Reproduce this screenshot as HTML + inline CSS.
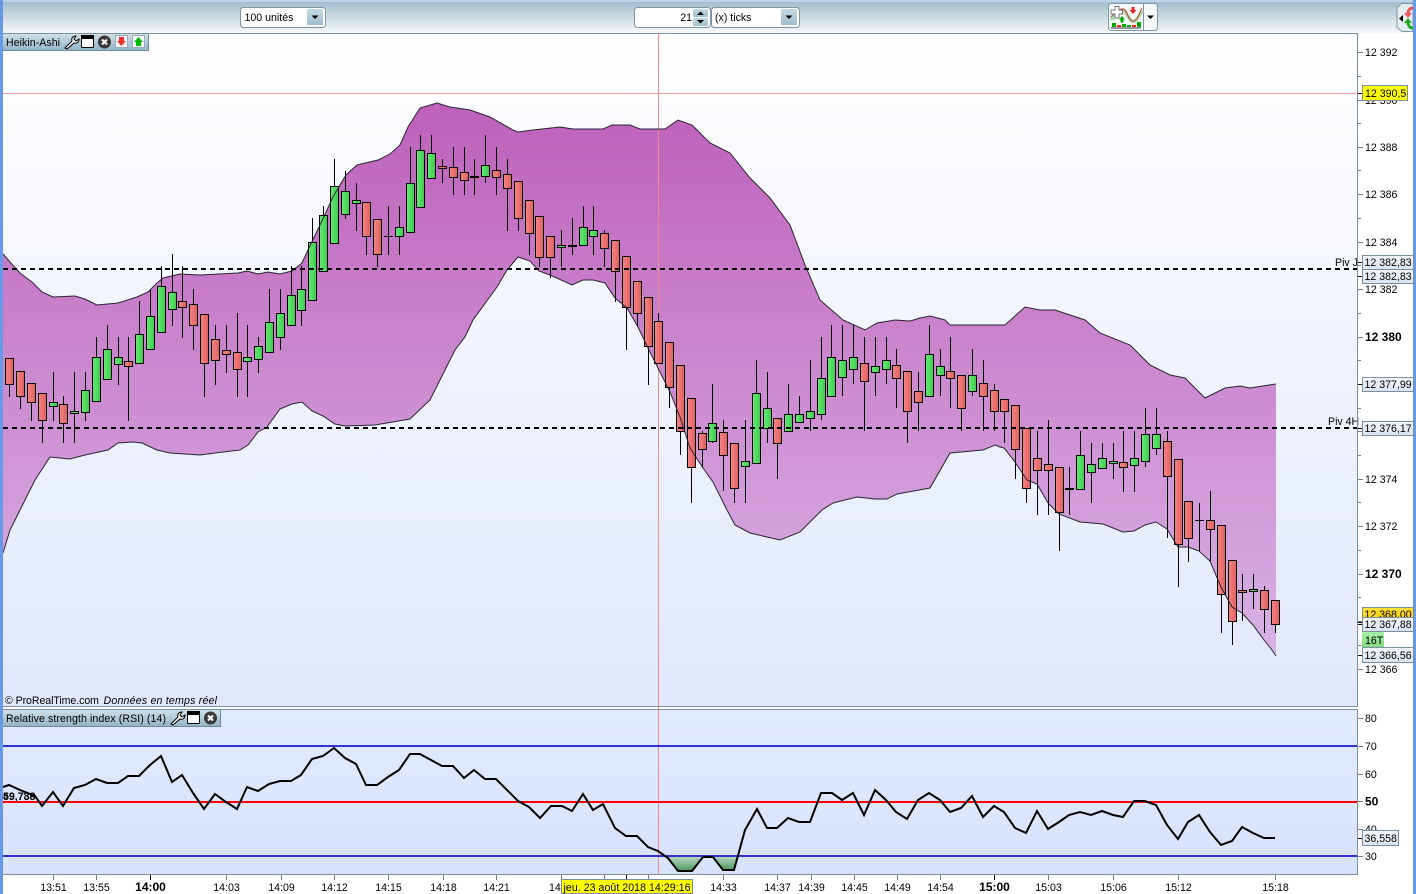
<!DOCTYPE html>
<html><head><meta charset="utf-8"><title>Heikin-Ashi</title>
<style>
html,body{margin:0;padding:0;background:#fff;width:1416px;height:894px;overflow:hidden}
svg{display:block}
text{font-family:"Liberation Sans",Arial,sans-serif;font-size:10.6px;fill:#000}
.b{font-weight:bold;font-size:12px}
.m{text-anchor:middle}
.r{fill:url(#gr);stroke:#000}
.g{fill:url(#gg);stroke:#000}
</style></head><body>
<svg width="1416" height="894" viewBox="0 0 1416 894" xmlns="http://www.w3.org/2000/svg">
<defs>
<linearGradient id="tb" x1="0" y1="0" x2="0" y2="1"><stop offset="0" stop-color="#9db9c8"/><stop offset="1" stop-color="#f6f9fb"/></linearGradient>
<linearGradient id="pn" x1="0" y1="0" x2="0" y2="1"><stop offset="0" stop-color="#ffffff"/><stop offset="1" stop-color="#e1e8fc"/></linearGradient>
<linearGradient id="rs" x1="0" y1="0" x2="0" y2="1"><stop offset="0" stop-color="#e1eaff"/><stop offset="1" stop-color="#d8e3fb"/></linearGradient>
<linearGradient id="bd" gradientUnits="userSpaceOnUse" x1="0" y1="100" x2="0" y2="656"><stop offset="0" stop-color="#bd60bb"/><stop offset="0.5" stop-color="#cc8acf"/><stop offset="1" stop-color="#d8b2e5"/></linearGradient>
<linearGradient id="gr" x1="0" y1="0" x2="1" y2="0"><stop offset="0" stop-color="#f58484"/><stop offset="1" stop-color="#e06060"/></linearGradient>
<linearGradient id="gg" x1="0" y1="0" x2="1" y2="0"><stop offset="0" stop-color="#66ea76"/><stop offset="1" stop-color="#3ecb4e"/></linearGradient>
<linearGradient id="lg" x1="0" y1="0" x2="0" y2="1"><stop offset="0" stop-color="#cfe0e8"/><stop offset="1" stop-color="#93b4c6"/></linearGradient>
<linearGradient id="bt" x1="0" y1="0" x2="0" y2="1"><stop offset="0" stop-color="#c4d8e2"/><stop offset="1" stop-color="#9fbdce"/></linearGradient>
<linearGradient id="gf" x1="0" y1="0" x2="0" y2="1"><stop offset="0" stop-color="#bcd8c4"/><stop offset="1" stop-color="#4c9a5e"/></linearGradient>
<linearGradient id="lb" x1="0" y1="0" x2="0" y2="1"><stop offset="0" stop-color="#f4f7fb"/><stop offset="1" stop-color="#d8e4f2"/></linearGradient>
<linearGradient id="gd" x1="0" y1="0" x2="0" y2="1"><stop offset="0" stop-color="#ffe23a"/><stop offset="1" stop-color="#ffc800"/></linearGradient>
<linearGradient id="tg" x1="0" y1="0" x2="0" y2="1"><stop offset="0" stop-color="#a8f0a8"/><stop offset="1" stop-color="#86d886"/></linearGradient>
</defs>

<!-- toolbar -->
<rect x="0" y="0" width="1416" height="33" fill="url(#tb)"/>
<rect x="0" y="0" width="1416" height="2" fill="#bcd4e8"/>
<rect x="240.500" y="7.500" width="85" height="20" rx="3" fill="#fff" stroke="#7d95a5"/>
<text x="244.500" y="21">100 unités</text>
<rect x="307" y="9" width="16" height="16" rx="1" fill="url(#bt)"/>
<path d="M311.500 15.500h7l-3.500 3.500z" fill="#000"/>
<rect x="634.500" y="7.500" width="76" height="20" rx="3" fill="#fff" stroke="#7d95a5"/>
<text x="692" y="21" text-anchor="end">21</text>
<rect x="693" y="9" width="15" height="8" rx="1" fill="url(#bt)"/>
<rect x="693" y="18" width="15" height="8" rx="1" fill="url(#bt)"/>
<path d="M697 15l3.500-3.500 3.500 3.500zM697 20h7l-3.500 3.500z" fill="#000"/>
<rect x="711.500" y="7.500" width="88" height="20" rx="3" fill="#fff" stroke="#7d95a5"/>
<text x="715" y="21">(x) ticks</text>
<rect x="781" y="9" width="16" height="16" rx="1" fill="url(#bt)"/>
<path d="M785.500 15.500h7l-3.500 3.500z" fill="#000"/>
<!-- indicator button -->
<rect x="1108.500" y="3.500" width="49" height="27" rx="3" fill="#f6f9fa" stroke="#8097a6"/>
<path d="M1143.500 4v26" stroke="#8097a6"/>
<path d="M1111 20c3-4 7-10 11-10s6 9 10 11 6-4 10-10" fill="none" stroke="#a9dca8" stroke-width="3.500"/>
<path d="M1111 17c4-5 8-8 12-8s5 11 9 12 7-5 10-13" fill="none" stroke="#c83838" stroke-width="1"/>
<rect x="1112" y="23" width="4" height="4" fill="#0a0"/><rect x="1117" y="25" width="4" height="2" fill="#e22"/><rect x="1122" y="24" width="4" height="3" fill="#0a0"/><rect x="1127" y="25" width="4" height="2" fill="#0a0"/><rect x="1132" y="25" width="4" height="2" fill="#e22"/><rect x="1137" y="22" width="4" height="5" fill="#0a0"/>
<path d="M1111 28h30" stroke="#335"/>
<path d="M1111 10h4v-3.500h4v3.500h3.500v4h-3.500v4h-4v-4h-4z" fill="#fff" stroke="#777"/>
<path d="M1119 19.500l3-3.500 3 3.500h-1.500v3h-3v-3z" fill="#0a0"/>
<path d="M1131.500 7h3v3h2l-3.500 4-3.500-4h2z" fill="#e22"/>
<path d="M1147 15.500h7l-3.500 3.500z" fill="#000"/>
<!-- right side icon -->
<path d="M1413 3.500h-11l-5 4v20l5 4h11z" fill="#e6edf2" stroke="#8097a6"/>
<path d="M1403 15v7l-4-3.500z" fill="#000"/>
<path d="M1413 8c-3 0-5 2-5 6" fill="none" stroke="#e55" stroke-width="3"/>
<path d="M1404 13h8l-4 5z" fill="#e55"/>
<path d="M1413 28c-3 0-5-2-5-6" fill="none" stroke="#2a2" stroke-width="3"/>
<path d="M1404 23h8l-4-5z" fill="#2a2"/>

<!-- panels -->
<rect x="3" y="34" width="1355" height="672" fill="url(#pn)"/>
<rect x="3" y="710" width="1355" height="164" fill="url(#rs)"/>

<!-- band -->
<polygon fill="url(#bd)" points="3,254 10,262 20,273 32,282 42,292 53,297 75,296 85,299 97,305 118,303 137,297 148,292 157,283 163,278 180,274 200,275 238,273 247,271 258,274 268,272 280,274 292,271 302,263 308,250 320,225 333,197 340,185 346,175 357,165 378,160 390,154 400,145 408,127 420,108 437,103 450,107 470,110 490,117 513,130 518,132 533,130 560,127 573,129 603,129 612,125 630,125 640,129 665,129 678,120 692,125 710,143 730,153 750,178 770,198 790,225 805,265 820,300 835,313 843,320 865,330 877,323 895,320 910,321 920,318 930,316 945,320 950,325 990,325 1005,325 1025,307 1040,310 1055,310 1085,320 1100,333 1130,345 1150,365 1170,375 1185,378 1205,398 1225,388 1240,386 1250,388 1276,384 1276,656 1272,650 1264,640 1253,625 1242,613 1232,607 1221,587 1210,561 1199,551 1188,547 1178,547 1167,529 1156,522 1145,525 1134,531 1123,532 1103,524 1080,522 1059,514 1048,503 1037,484 1027,480 1015,462 1004,448 1000,447 995,445 983,450 950,453 930,488 897,494 887,499 875,499 857,497 833,503 822,510 800,532 780,540 750,533 735,525 727,510 713,482 703,468 690,448 680,417 670,392 660,372 648,348 638,327 627,308 615,298 605,283 593,280 583,280 572,285 550,275 539,271 530,261 518,257 507,270 497,287 473,320 465,337 455,350 440,380 430,400 410,419 375,425 345,426 335,424 323,416 312,411 302,402 292,404 280,409 267,427 258,432 248,445 240,450 215,453 200,455 170,453 157,450 142,443 133,442 118,443 108,450 85,455 70,459 50,457 35,480 20,510 10,530 3,553"/>

<!-- crosshair -->
<path d="M658.500 34V874" stroke="#f08a8a"/>
<path d="M3 93.500H1358" stroke="#f2a0a0"/>

<!-- wicks -->
<path fill="none" stroke="#000" d="M9.500 358V397M20.500 371V409M31.500 383V421M42.500 393V443M53.500 372V421M63.500 396V443M74.500 372V443M85.500 372V421M96.500 337V401M107.500 325V379M118.500 337V385M128.500 337V421M139.500 301V363M150.500 290V349M161.500 266V332M172.500 254V326M182.500 266V338M193.500 289V350M204.500 314V397M215.500 325V385M226.500 325V373M237.500 313V397M247.500 325V397M258.500 337V373M269.500 289V352M280.500 289V350M291.500 266V325M301.500 266V326M312.500 218V300M323.500 206V271M334.500 159V243M345.500 171V219M356.500 183V231M366.500 202V255M377.500 219V267M388.500 206V255M399.500 206V255M410.500 147V232M420.500 135V207M431.500 135V178M442.500 159V183M453.500 147V195M464.500 147V195M474.500 159V195M485.500 135V183M496.500 147V195M507.500 159V231M518.500 181V231M529.500 200V255M539.500 216V267M550.500 236V278M561.500 230V267M572.500 218V255M583.500 206V245M593.500 206V255M604.500 230V267M615.500 240V302M626.500 256V350M637.500 281V327M648.500 297V385M658.500 313V363M669.500 342V408M680.500 365V455M691.500 398V503M702.500 431V468M712.500 384V443M723.500 420V491M734.500 443V503M745.500 420V503M756.500 360V463M767.500 372V443M777.500 418V479M788.500 384V431M799.500 396V422M810.500 360V431M821.500 337V420M831.500 325V396M842.500 325V396M853.500 325V384M864.500 337V431M875.500 337V396M886.500 337V384M896.500 349V408M907.500 371V443M918.500 372V431M929.500 325V396M940.500 349V396M950.500 337V408M961.500 375V431M972.500 349V396M983.500 360V431M994.500 384V431M1004.500 399V443M1015.500 405V479M1026.500 428V503M1037.500 431V515M1048.500 420V515M1059.500 467V551M1069.500 467V515M1080.500 431V489M1091.500 443V503M1102.500 443V468M1113.500 443V479M1123.500 431V492M1134.500 431V492M1145.500 408V467M1156.500 408V455M1167.500 431V538M1178.500 459V587M1188.500 501V562M1199.500 503V551M1210.500 491V562M1221.500 525V633M1232.500 560V645M1242.500 574V621M1253.500 574V609M1264.500 586V633M1275.500 600V633"/>
<path fill="none" stroke="#000" d="M384 236.500h9M1195 520.500h9"/>
<path fill="none" stroke="#000" stroke-width="2" d="M470 177h9M568 246h9M1065 489h9"/>

<!-- bodies -->
<g>
<rect class="r" x="5.500" y="358.500" width="8" height="26"/>
<rect class="r" x="16.500" y="371.500" width="8" height="25"/>
<rect class="r" x="27.500" y="383.500" width="8" height="19"/>
<rect class="r" x="38.500" y="393.500" width="8" height="27"/>
<rect class="g" x="49.500" y="402.500" width="8" height="4"/>
<rect class="r" x="59.500" y="404.500" width="8" height="19"/>
<rect class="g" x="70.500" y="411.500" width="8" height="2"/>
<rect class="g" x="81.500" y="390.500" width="8" height="22"/>
<rect class="g" x="92.500" y="357.500" width="8" height="44"/>
<rect class="g" x="103.500" y="349.500" width="8" height="30"/>
<rect class="g" x="114.500" y="357.500" width="8" height="7"/>
<rect class="r" x="124.500" y="361.500" width="8" height="5"/>
<rect class="g" x="135.500" y="334.500" width="8" height="29"/>
<rect class="g" x="146.500" y="316.500" width="8" height="33"/>
<rect class="g" x="157.500" y="286.500" width="8" height="46"/>
<rect class="g" x="168.500" y="292.500" width="8" height="17"/>
<rect class="r" x="178.500" y="301.500" width="8" height="6"/>
<rect class="r" x="189.500" y="304.500" width="8" height="21"/>
<rect class="r" x="200.500" y="314.500" width="8" height="49"/>
<rect class="r" x="211.500" y="339.500" width="8" height="21"/>
<rect class="r" x="222.500" y="350.500" width="8" height="4"/>
<rect class="r" x="233.500" y="352.500" width="8" height="17"/>
<rect class="g" x="243.500" y="357.500" width="8" height="4"/>
<rect class="g" x="254.500" y="346.500" width="8" height="13"/>
<rect class="g" x="265.500" y="322.500" width="8" height="30"/>
<rect class="g" x="276.500" y="313.500" width="8" height="24"/>
<rect class="g" x="287.500" y="295.500" width="8" height="30"/>
<rect class="g" x="297.500" y="289.500" width="8" height="21"/>
<rect class="g" x="308.500" y="242.500" width="8" height="58"/>
<rect class="g" x="319.500" y="215.500" width="8" height="56"/>
<rect class="g" x="330.500" y="186.500" width="8" height="57"/>
<rect class="g" x="341.500" y="191.500" width="8" height="23"/>
<rect class="g" x="352.500" y="200.500" width="8" height="3"/>
<rect class="r" x="362.500" y="202.500" width="8" height="34"/>
<rect class="r" x="373.500" y="219.500" width="8" height="35"/>
<rect class="g" x="395.500" y="227.500" width="8" height="9"/>
<rect class="g" x="406.500" y="183.500" width="8" height="49"/>
<rect class="g" x="416.500" y="150.500" width="8" height="57"/>
<rect class="g" x="427.500" y="153.500" width="8" height="25"/>
<rect class="r" x="438.500" y="166.500" width="8" height="2"/>
<rect class="r" x="449.500" y="167.500" width="8" height="10"/>
<rect class="r" x="460.500" y="172.500" width="8" height="8"/>
<rect class="g" x="481.500" y="165.500" width="8" height="11"/>
<rect class="r" x="492.500" y="170.500" width="8" height="7"/>
<rect class="r" x="503.500" y="174.500" width="8" height="14"/>
<rect class="r" x="514.500" y="181.500" width="8" height="37"/>
<rect class="r" x="525.500" y="200.500" width="8" height="33"/>
<rect class="r" x="535.500" y="216.500" width="8" height="41"/>
<rect class="r" x="546.500" y="236.500" width="8" height="21"/>
<rect class="g" x="557.500" y="245.500" width="8" height="2"/>
<rect class="g" x="579.500" y="227.500" width="8" height="18"/>
<rect class="g" x="589.500" y="230.500" width="8" height="6"/>
<rect class="r" x="600.500" y="233.500" width="8" height="15"/>
<rect class="r" x="611.500" y="240.500" width="8" height="31"/>
<rect class="r" x="622.500" y="256.500" width="8" height="51"/>
<rect class="r" x="633.500" y="281.500" width="8" height="32"/>
<rect class="r" x="644.500" y="297.500" width="8" height="49"/>
<rect class="r" x="654.500" y="321.500" width="8" height="42"/>
<rect class="r" x="665.500" y="342.500" width="8" height="45"/>
<rect class="r" x="676.500" y="365.500" width="8" height="66"/>
<rect class="r" x="687.500" y="398.500" width="8" height="69"/>
<rect class="r" x="698.500" y="433.500" width="8" height="16"/>
<rect class="g" x="708.500" y="423.500" width="8" height="18"/>
<rect class="r" x="719.500" y="432.500" width="8" height="23"/>
<rect class="r" x="730.500" y="443.500" width="8" height="45"/>
<rect class="g" x="741.500" y="461.500" width="8" height="5"/>
<rect class="g" x="752.500" y="393.500" width="8" height="70"/>
<rect class="g" x="763.500" y="408.500" width="8" height="20"/>
<rect class="r" x="773.500" y="418.500" width="8" height="25"/>
<rect class="g" x="784.500" y="414.500" width="8" height="17"/>
<rect class="g" x="795.500" y="414.500" width="8" height="8"/>
<rect class="g" x="806.500" y="411.500" width="8" height="7"/>
<rect class="g" x="817.500" y="378.500" width="8" height="36"/>
<rect class="g" x="827.500" y="357.500" width="8" height="39"/>
<rect class="g" x="838.500" y="360.500" width="8" height="17"/>
<rect class="g" x="849.500" y="357.500" width="8" height="12"/>
<rect class="r" x="860.500" y="363.500" width="8" height="18"/>
<rect class="g" x="871.500" y="366.500" width="8" height="6"/>
<rect class="g" x="882.500" y="360.500" width="8" height="9"/>
<rect class="r" x="892.500" y="365.500" width="8" height="13"/>
<rect class="r" x="903.500" y="371.500" width="8" height="40"/>
<rect class="r" x="914.500" y="391.500" width="8" height="11"/>
<rect class="g" x="925.500" y="354.500" width="8" height="42"/>
<rect class="g" x="936.500" y="366.500" width="8" height="9"/>
<rect class="r" x="946.500" y="371.500" width="8" height="7"/>
<rect class="r" x="957.500" y="375.500" width="8" height="33"/>
<rect class="g" x="968.500" y="375.500" width="8" height="16"/>
<rect class="r" x="979.500" y="383.500" width="8" height="13"/>
<rect class="r" x="990.500" y="390.500" width="8" height="21"/>
<rect class="r" x="1000.500" y="399.500" width="8" height="12"/>
<rect class="r" x="1011.500" y="405.500" width="8" height="44"/>
<rect class="r" x="1022.500" y="428.500" width="8" height="60"/>
<rect class="r" x="1033.500" y="458.500" width="8" height="12"/>
<rect class="r" x="1044.500" y="464.500" width="8" height="6"/>
<rect class="r" x="1055.500" y="467.500" width="8" height="45"/>
<rect class="g" x="1076.500" y="455.500" width="8" height="34"/>
<rect class="g" x="1087.500" y="464.500" width="8" height="8"/>
<rect class="g" x="1098.500" y="458.500" width="8" height="10"/>
<rect class="g" x="1109.500" y="461.500" width="8" height="2"/>
<rect class="r" x="1119.500" y="462.500" width="8" height="5"/>
<rect class="g" x="1130.500" y="458.500" width="8" height="7"/>
<rect class="g" x="1141.500" y="434.500" width="8" height="27"/>
<rect class="g" x="1152.500" y="434.500" width="8" height="14"/>
<rect class="r" x="1163.500" y="441.500" width="8" height="35"/>
<rect class="r" x="1174.500" y="459.500" width="8" height="85"/>
<rect class="r" x="1184.500" y="501.500" width="8" height="37"/>
<rect class="r" x="1206.500" y="520.500" width="8" height="9"/>
<rect class="r" x="1217.500" y="525.500" width="8" height="69"/>
<rect class="r" x="1228.500" y="560.500" width="8" height="61"/>
<rect class="r" x="1238.500" y="590.500" width="8" height="2"/>
<rect class="g" x="1249.500" y="589.500" width="8" height="2"/>
<rect class="r" x="1260.500" y="590.500" width="8" height="19"/>
<rect class="r" x="1271.500" y="600.500" width="8" height="24"/>
</g>

<!-- band edges -->
<polyline fill="none" stroke="#2a2430" stroke-width="1" points="3,254 10,262 20,273 32,282 42,292 53,297 75,296 85,299 97,305 118,303 137,297 148,292 157,283 163,278 180,274 200,275 238,273 247,271 258,274 268,272 280,274 292,271 302,263 308,250 320,225 333,197 340,185 346,175 357,165 378,160 390,154 400,145 408,127 420,108 437,103 450,107 470,110 490,117 513,130 518,132 533,130 560,127 573,129 603,129 612,125 630,125 640,129 665,129 678,120 692,125 710,143 730,153 750,178 770,198 790,225 805,265 820,300 835,313 843,320 865,330 877,323 895,320 910,321 920,318 930,316 945,320 950,325 990,325 1005,325 1025,307 1040,310 1055,310 1085,320 1100,333 1130,345 1150,365 1170,375 1185,378 1205,398 1225,388 1240,386 1250,388 1276,384"/>
<polyline fill="none" stroke="#2a2430" stroke-width="1" points="1276,656 1272,650 1264,640 1253,625 1242,613 1232,607 1221,587 1210,561 1199,551 1188,547 1178,547 1167,529 1156,522 1145,525 1134,531 1123,532 1103,524 1080,522 1059,514 1048,503 1037,484 1027,480 1015,462 1004,448 1000,447 995,445 983,450 950,453 930,488 897,494 887,499 875,499 857,497 833,503 822,510 800,532 780,540 750,533 735,525 727,510 713,482 703,468 690,448 680,417 670,392 660,372 648,348 638,327 627,308 615,298 605,283 593,280 583,280 572,285 550,275 539,271 530,261 518,257 507,270 497,287 473,320 465,337 455,350 440,380 430,400 410,419 375,425 345,426 335,424 323,416 312,411 302,402 292,404 280,409 267,427 258,432 248,445 240,450 215,453 200,455 170,453 157,450 142,443 133,442 118,443 108,450 85,455 70,459 50,457 35,480 20,510 10,530 3,553"/>

<!-- dashed pivots -->
<path d="M3 269H1358M3 428H1358" stroke="#000" stroke-width="2" stroke-dasharray="5 4" fill="none"/>
<text x="1335" y="266">Piv J</text>
<text x="1328" y="425">Piv 4H</text>

<text x="5" y="704" textLength="94">© ProRealTime.com</text>
<text x="103.500" y="704" font-style="italic" textLength="113.500">Données en temps réel</text>

<!-- RSI -->
<polygon fill="url(#gf)" points="664,856 678,871 692,871 702,856"/>
<polygon fill="url(#gf)" points="713,856 723,870 734,870 738,856"/>
<path d="M658.500 710V874" stroke="#f08a8a"/>
<rect x="3" y="745" width="1355" height="2" fill="#3232d2"/>
<rect x="3" y="801" width="1355" height="2" fill="#f00"/>
<rect x="3" y="855" width="1355" height="2" fill="#3232d2"/>
<polyline fill="none" stroke="#000" stroke-width="2" points="3,787 9,785 20,790 35,796 42,806 53,792 63,806 74,788 85,785 96,779 107,783 118,783 128,776 139,776 150,765 161,756 172,782 182,775 193,793 204,809 215,794 226,802 237,809 247,787 258,791 269,784 280,781 291,781 301,775 312,759 323,756 334,748 345,758 356,764 366,785 377,785 388,777 399,770 410,754 420,754 431,760 442,766 453,766 464,778 474,770 485,779 496,779 507,790 518,801 529,807 540,818 551,806 562,806 572,811 583,794 593,810 603,804 615,828 626,836 637,836 648,847 658,851 668,858 678,871 692,871 703,857 713,857 723,870 734,870 745,830 757,809 767,828 777,828 788,818 799,822 810,822 821,793 832,793 842,800 853,793 864,815 875,790 886,800 896,812 907,819 918,800 929,793 940,800 950,812 961,808 972,796 983,817 994,806 1004,812 1015,828 1026,833 1037,811 1048,829 1059,822 1069,815 1080,812 1091,815 1102,811 1113,815 1123,817 1134,801 1145,801 1156,805 1167,825 1178,839 1188,822 1199,815 1210,832 1221,845 1232,841 1242,827 1253,833 1264,838 1275,838"/>
<text x="3" y="800" font-weight="bold" fill="#000">59,738</text>
<text x="3" y="800" font-weight="normal">49,789</text>

<!-- borders -->
<path d="M3 33.500H1358M3 706.500H1358M3 709.500H1358M3 874.500H1358M1357.500 33V706M1357.500 709V874" stroke="#7b8f9d" fill="none"/>
<rect x="0" y="0" width="3" height="894" fill="#6699e8"/>
<rect x="1413" y="0" width="3" height="894" fill="#6699e8"/>

<!-- axis ticks -->
<path stroke="#6d8090" fill="none" d="M1358 52.500h5M1358 100.500h5M1358 147.500h5M1358 194.500h5M1358 242.500h5M1358 289.500h5M1358 337.500h5M1358 384.500h5M1358 431.500h5M1358 479.500h5M1358 526.500h5M1358 574.500h5M1358 621.500h5M1358 669.500h5M1358 76.500h3M1358 123.500h3M1358 170.500h3M1358 218.500h3M1358 265.500h3M1358 313.500h3M1358 360.500h3M1358 408.500h3M1358 455.500h3M1358 502.500h3M1358 550.500h3M1358 597.500h3M1358 645.500h3M1358 718.500h5M1358 746.500h5M1358 774.500h5M1358 801.500h5M1358 829.500h5M1358 856.500h5"/>
<path stroke="#000" fill="none" d="M1358 93.500h5M1358 262.500h5M1358 276.500h5M1358 384.500h5M1358 428.500h5M1358 622.500h5M1358 624.500h5M1358 655.500h5M1358 838.500h5"/>
<path stroke="#6d8090" fill="none" d="M53.500 875v5M96.500 875v5M226.500 875v5M281.500 875v5M334.500 875v5M388.500 875v5M443.500 875v5M496.500 875v5M561.500 875v4M604.500 875v4M648.500 875v4M723.500 875v5M777.500 875v5M811.500 875v5M854.500 875v5M897.500 875v5M940.500 875v5M1048.500 875v5M1113.500 875v5M1178.500 875v5M1275.500 875v5"/>
<path stroke="#000" fill="none" d="M150.500 875v5M626.500 875v4M994.500 875v5"/>

<!-- y labels -->
<g>
<text x="1365" y="56">12 392</text>
<text x="1365" y="151">12 388</text>
<text x="1365" y="198">12 386</text>
<text x="1365" y="246">12 384</text>
<text x="1365" y="293">12 382</text>
<text x="1365" y="341" class="b">12 380</text>
<text x="1365" y="483">12 374</text>
<text x="1365" y="530">12 372</text>
<text x="1365" y="578" class="b">12 370</text>
<text x="1365" y="673">12 366</text>
<text x="1365" y="104">12 390</text>
</g>
<rect x="1362.500" y="85.500" width="45" height="15" fill="#ffff00" stroke="#7b8f9d"/>
<text x="1365" y="97">12 390,5</text>
<rect x="1362.500" y="255.500" width="51" height="14" fill="url(#lb)" stroke="#7b8f9d"/>
<text x="1364.500" y="266">12 382,83</text>
<rect x="1362.500" y="269.500" width="51" height="14" fill="url(#lb)" stroke="#7b8f9d"/>
<text x="1364.500" y="280">12 382,83</text>
<rect x="1362.500" y="377.500" width="51" height="14" fill="url(#lb)" stroke="#7b8f9d"/>
<text x="1364.500" y="388">12 377,99</text>
<rect x="1362.500" y="421.500" width="51" height="14" fill="url(#lb)" stroke="#7b8f9d"/>
<text x="1364.500" y="432">12 376,17</text>
<rect x="1362.500" y="607.500" width="51" height="14" fill="url(#gd)" stroke="#7b8f9d"/>
<text x="1364.500" y="618">12 368,00</text>
<rect x="1362.500" y="617.500" width="51" height="14" fill="url(#lb)" stroke="#7b8f9d"/>
<text x="1364.500" y="628">12 367,88</text>
<rect x="1362" y="632" width="22" height="15" fill="url(#tg)"/>
<text x="1365" y="644">16T</text>
<rect x="1362.500" y="647.500" width="51" height="15" fill="url(#lb)" stroke="#7b8f9d"/>
<text x="1364.500" y="659">12 366,56</text>

<!-- rsi labels -->
<text x="1365" y="722">80</text>
<text x="1365" y="750">70</text>
<text x="1365" y="778">60</text>
<text x="1365" y="805.500" class="b">50</text>
<text x="1365" y="833">40</text>
<text x="1365" y="860">30</text>
<rect x="1362.500" y="830.500" width="36" height="15" fill="url(#lb)" stroke="#7b8f9d"/>
<text x="1364.500" y="842">36,558</text>

<!-- time labels -->
<g>
<text class="m" x="53.500" y="891">13:51</text>
<text class="m" x="96.500" y="891">13:55</text>
<text class="m b" x="150.500" y="891">14:00</text>
<text class="m" x="226.500" y="891">14:03</text>
<text class="m" x="281.500" y="891">14:09</text>
<text class="m" x="334.500" y="891">14:12</text>
<text class="m" x="388.500" y="891">14:15</text>
<text class="m" x="443.500" y="891">14:18</text>
<text class="m" x="496.500" y="891">14:21</text>
<text x="549" y="891">14</text>
<text class="m" x="723.500" y="891">14:33</text>
<text class="m" x="777.500" y="891">14:37</text>
<text class="m" x="811.500" y="891">14:39</text>
<text class="m" x="854.500" y="891">14:45</text>
<text class="m" x="897.500" y="891">14:49</text>
<text class="m" x="940.500" y="891">14:54</text>
<text class="m b" x="994.500" y="891">15:00</text>
<text class="m" x="1048.500" y="891">15:03</text>
<text class="m" x="1113.500" y="891">15:06</text>
<text class="m" x="1178.500" y="891">15:12</text>
<text class="m" x="1275.500" y="891">15:18</text>
</g>
<rect x="561.500" y="879.500" width="131" height="14" fill="#ffff00" stroke="#7b8f9d"/>
<text x="563.500" y="891" textLength="127">jeu. 23 août 2018 14:29:16</text>

<!-- legend top -->
<rect x="3" y="34" width="145" height="16" fill="url(#lg)"/>
<path d="M3 50.500H148.500V34" stroke="#6e8a9c" fill="none"/>
<text x="6" y="46" textLength="54">Heikin-Ashi</text>
<path d="M65 48l7-7c-1-3 1-5 4-5l-2 3 2 2 3-2c0 3-2 5-5 4l-7 6z" fill="#fff" stroke="#000"/>
<rect x="81.500" y="35.500" width="12" height="12" rx="1" fill="#fff" stroke="#000"/><rect x="81" y="35" width="13" height="4" fill="#000"/>
<circle cx="104.500" cy="42" r="6.500" fill="#3a3a3a"/><path d="M102 39.500l5 5M107 39.500l-5 5" stroke="#fff" stroke-width="2"/>
<rect x="115.500" y="35.500" width="12" height="12" fill="#f4f7fa" stroke="#9ab"/><path d="M119 37h5v4h2l-4.500 5-4.500-5h2z" fill="#e33"/>
<rect x="132.500" y="35.500" width="12" height="12" fill="#f4f7fa" stroke="#9ab"/><path d="M136 46h5v-4h2l-4.500-5-4.500 5h2z" fill="#0b0"/>

<!-- legend rsi -->
<rect x="3" y="710" width="217" height="16" fill="url(#lg)"/>
<path d="M3 726.500H220.500V710" stroke="#6e8a9c" fill="none"/>
<text x="6" y="722" textLength="160">Relative strength index (RSI) (14)</text>
<path d="M171 724l7-7c-1-3 1-5 4-5l-2 3 2 2 3-2c0 3-2 5-5 4l-7 6z" fill="#fff" stroke="#000"/>
<rect x="187.500" y="711.500" width="12" height="12" rx="1" fill="#fff" stroke="#000"/><rect x="187" y="711" width="13" height="4" fill="#000"/>
<circle cx="210.500" cy="718" r="6.500" fill="#3a3a3a"/><path d="M208 715.500l5 5M213 715.500l-5 5" stroke="#fff" stroke-width="2"/>
</svg>
</body></html>
